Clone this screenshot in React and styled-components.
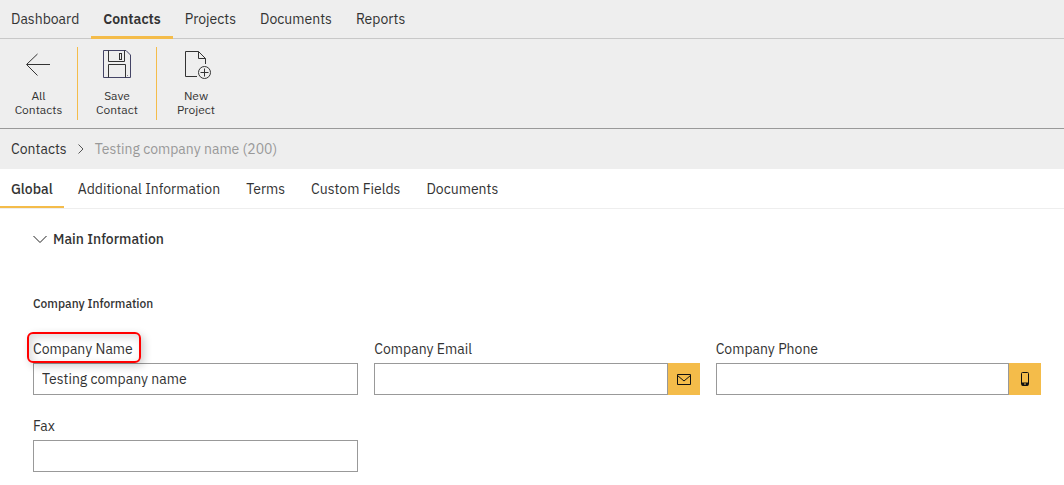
import React, { useState } from "react";
import styled, { createGlobalStyle } from "styled-components";

const navLinks = ["Dashboard", "Contacts", "Projects", "Documents", "Reports"];
const tabs = [
  "Global",
  "Additional Information",
  "Terms",
  "Custom Fields",
  "Documents",
];

const BackIcon = () => (
  <svg width="32" height="32" viewBox="0 0 32 32" fill="none" stroke="#333">
    <path d="M27 15.5H4M14.5 5L3.5 15.5L14.5 26.5" />
  </svg>
);

const SaveIcon = () => (
  <svg width="32" height="32" viewBox="0 0 32 32" fill="none" stroke="#333">
    <path d="M2.5 1.5H25L29.5 6V28.5H2.5Z" stroke="#446" />
    <path d="M7.5 1.5V12.5H23.5V1.5M7.5 28.5V15.5H24.5V28.5" />
    <rect x="18.5" y="4.5" width="2" height="6" />
    <path d="M26 26.5h1" stroke="#888" />
  </svg>
);

const NewIcon = () => (
  <svg width="32" height="32" viewBox="0 0 32 32" fill="none" stroke="#333">
    <path d="M17 27.5H5.5V2.5H18.5L25.5 9.5V15" />
    <path d="M18.5 2.5V9.5H25.5" />
    <circle cx="24.5" cy="23.5" r="6" />
    <path d="M20.5 23.5H28.5M24.5 19.5V27.5" />
  </svg>
);

const CrumbIcon = () => (
  <svg width="8" height="12" viewBox="0 0 8 12" fill="none" stroke="#555">
    <path d="M1.5 1.5L6 6L1.5 10.5" />
  </svg>
);

const ChevronIcon = () => (
  <svg width="14" height="10" viewBox="0 0 14 10" fill="none" stroke="#222">
    <path d="M0.5 2L7 8.5L13.5 2" />
  </svg>
);

const MailIcon = () => (
  <svg width="16" height="16" viewBox="0 0 16 16" fill="none" stroke="#111">
    <path d="M1.5 3.5H14.5V13.5H1.5Z" />
    <path d="M1.5 4.5L8 10L14.5 4.5" />
  </svg>
);

const PhoneIcon = () => (
  <svg width="16" height="16" viewBox="0 0 16 16" fill="none" stroke="#111">
    <rect x="4.5" y="1.5" width="7" height="13" rx="1" />
    <path d="M5 13H11" strokeWidth="3" />
    <path d="M7 13H9" stroke="#f4bc4a" />
  </svg>
);

const actions = [
  { first: "All", second: "Contacts", Icon: BackIcon },
  { first: "Save", second: "Contact", Icon: SaveIcon },
  { first: "New", second: "Project", Icon: NewIcon },
];

function Field({ id, label, value = "", type = "text", Icon, highlight }) {
  const [text, setText] = useState(value);

  return (
    <FieldBox>
      <Label htmlFor={id} $highlight={highlight}>
        {label}
      </Label>
      <InputRow>
        <Input
          id={id}
          type={type}
          value={text}
          onChange={(e) => setText(e.target.value)}
        />
        {Icon && (
          <InputButton type="button" aria-label={label}>
            <Icon />
          </InputButton>
        )}
      </InputRow>
    </FieldBox>
  );
}

export default function App() {
  const [page, setPage] = useState("Contacts");
  const [tab, setTab] = useState("Global");
  const [open, setOpen] = useState(true);

  return (
    <>
      <GlobalStyle />
      <Header>
        <Nav>
          {navLinks.map((name) => (
            <NavLink
              key={name}
              href="#"
              $active={name === page}
              onClick={() => setPage(name)}
            >
              {name}
            </NavLink>
          ))}
        </Nav>
        <Toolbar>
          {actions.map(({ first, second, Icon }) => (
            <Action key={first} type="button">
              <Icon />
              <span>
                {first}
                <br />
                {second}
              </span>
            </Action>
          ))}
        </Toolbar>
        <Breadcrumb>
          <a href="#">Contacts</a>
          <CrumbIcon />
          <span>Testing company name (200)</span>
        </Breadcrumb>
      </Header>
      <Tabs>
        {tabs.map((name) => (
          <Tab
            key={name}
            type="button"
            $active={name === tab}
            onClick={() => setTab(name)}
          >
            {name}
          </Tab>
        ))}
      </Tabs>
      <Content>
        <SectionToggle type="button" onClick={() => setOpen(!open)}>
          <ChevronIcon />
          Main Information
        </SectionToggle>
        {open && (
          <>
            <GroupTitle>Company Information</GroupTitle>
            <Fields>
              <Field
                id="name"
                label="Company Name"
                value="Testing company name"
                highlight
              />
              <Field
                id="email"
                label="Company Email"
                type="email"
                Icon={MailIcon}
              />
              <Field
                id="phone"
                label="Company Phone"
                type="tel"
                Icon={PhoneIcon}
              />
              <Field id="fax" label="Fax" type="tel" />
            </Fields>
          </>
        )}
      </Content>
    </>
  );
}

const GlobalStyle = createGlobalStyle`
  * {
    box-sizing: border-box;
  }
  body {
    margin: 0;
    background: #fff;
    color: #333;
    font-family: "IBM Plex Sans", Inter, sans-serif;
    font-size: 14px;
    line-height: 20px;
  }
  button, input {
    font: inherit;
    color: inherit;
  }
  button {
    border: none;
    background: none;
    cursor: pointer;
  }
  a {
    color: inherit;
    text-decoration: none;
  }
`;

const Header = styled.header`
  background: #eee;
`;

const Nav = styled.nav`
  display: flex;
  height: 39px;
  border-bottom: 1px solid #c8c8c8;
`;

const NavLink = styled.a`
  height: 39px;
  padding: 9px 12px 0;
  border-bottom: 3px solid ${(p) => (p.$active ? "#f4bc4a" : "transparent")};
  font-weight: ${(p) => (p.$active ? 600 : 400)};
  &:first-child {
    padding-left: 11px;
  }
`;

const Toolbar = styled.div`
  display: flex;
  padding: 8px 0;
  border-bottom: 1px solid #999;
`;

const Action = styled.button`
  display: flex;
  flex-direction: column;
  align-items: center;
  gap: 8px;
  width: 79px;
  height: 73px;
  padding: 2px 0 0;
  font-size: 12px;
  line-height: 14px;
  &:first-child {
    width: 77px;
  }
  & + & {
    border-left: 1px solid #f4bc4a;
  }
`;

const Breadcrumb = styled.div`
  display: flex;
  align-items: center;
  gap: 10px;
  height: 40px;
  padding: 0 11px;
  span {
    color: #999;
  }
`;

const Tabs = styled.div`
  display: flex;
  gap: 2px;
  height: 40px;
  border-bottom: 1px solid #eee;
`;

const Tab = styled.button`
  height: 39px;
  padding: 2px 12px 0;
  border-bottom: 2px solid ${(p) => (p.$active ? "#f4bc4a" : "transparent")};
  font-weight: ${(p) => (p.$active ? 500 : 400)};
  &:first-child {
    padding: 2px 11px 0;
  }
`;

const Content = styled.main`
  padding: 20px 23px 13px 33px;
`;

const SectionToggle = styled.button`
  display: flex;
  align-items: center;
  gap: 6px;
  padding: 0;
  font-weight: 500;
`;

const GroupTitle = styled.h3`
  margin: 45px 0 25px;
  font-size: 12px;
  font-weight: 500;
`;

const Fields = styled.div`
  display: grid;
  grid-template-columns: repeat(3, 1fr);
  gap: 21px 16px;
`;

const FieldBox = styled.div`
  display: flex;
  flex-direction: column;
  align-items: flex-start;
  gap: 4px;
`;

const Label = styled.label`
  position: relative;
  &::after {
    content: "";
    display: ${(p) => (p.$highlight ? "block" : "none")};
    position: absolute;
    inset: -7px -8px -4px -6px;
    border: 2px solid #f00;
    border-radius: 6px;
    box-shadow: 3px 3px 8px rgba(0, 0, 0, 0.2),
      inset 3px 3px 8px rgba(0, 0, 0, 0.15);
    pointer-events: none;
  }
`;

const InputRow = styled.div`
  display: flex;
  width: 100%;
`;

const Input = styled.input`
  flex: 1;
  min-width: 0;
  height: 32px;
  padding: 0 8px;
  border: 1px solid #999;
  border-radius: 0;
  background: #fff;
  outline: none;
`;

const InputButton = styled.button`
  display: flex;
  align-items: center;
  justify-content: center;
  width: 32px;
  height: 32px;
  padding: 0;
  background: #f4bc4a;
`;
